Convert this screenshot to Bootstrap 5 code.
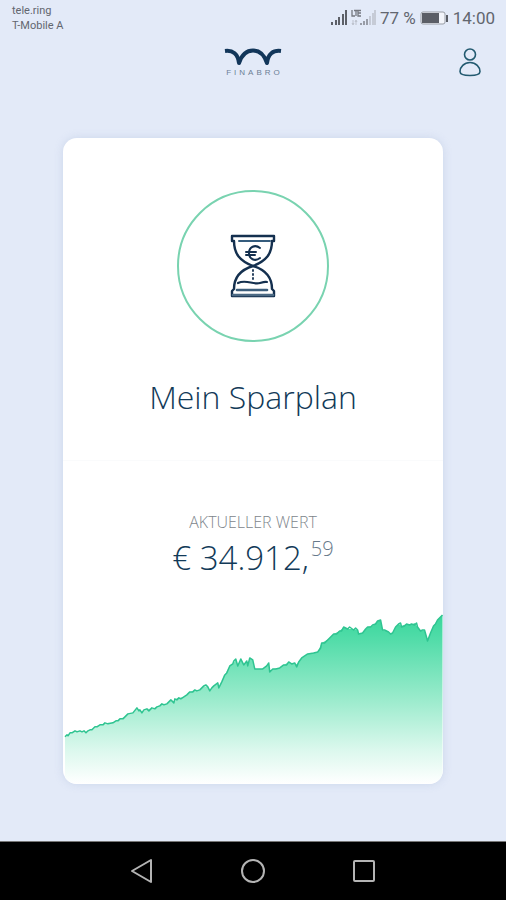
<!DOCTYPE html>
<html lang="de">
<head>
<meta charset="utf-8">
<meta name="viewport" content="width=device-width, initial-scale=1">
<title>Finabro – Mein Sparplan</title>
<link href="https://cdn.jsdelivr.net/npm/bootstrap@5.3.0/dist/css/bootstrap.min.css" rel="stylesheet">
<style>
  body { background: #e3eaf8; font-family: "Open Sans", sans-serif; color: #123a58; }
  svg { display: block; }
  .status { height: 36px; padding: 3px 11px 0 12px; font-family: Roboto, sans-serif; color: #62666f; }
  .carrier { font-size: 11px; line-height: 15px; }
  .meter { font-size: 17px; line-height: 30px; }
  .brandbar { display: grid; grid-template-columns: 1fr auto 1fr; padding: 10px 24px 0 24px; }
  .brand { grid-column: 2; }
  .wordmark { font-size: 8px; line-height: 10px; letter-spacing: 3px; margin-right: -3px; color: #6b7f96; font-family: "Liberation Sans", sans-serif; }
  .plan { width: 75%; margin-top: 12px; border-radius: 14px; box-shadow: 0 0 8px rgba(150, 170, 205, .3); }
  .emblem { width: 152px; height: 152px; border: 2px solid #79d3b0; }
  .plan-top { padding: 52px 0 40px; border-bottom: 1px solid #fafbfc; }
  .plan-title { font-size: 32px; line-height: 46px; font-weight: 300; margin: 32px 0 0; }
  .plan-value { padding: 50px 0 31px; }
  .caption-text { font-size: 16px; line-height: 22px; font-weight: 300; color: #7d858c; }
  .amount { gap: 2px; margin-top: 2px; font-size: 33px; line-height: 46px; font-weight: 300; }
  .cents { font-size: 20px; line-height: 28px; color: #66798a; }
  .softkeys { background: #000; height: 59px; border-top: 1px solid #777; padding: 0 21%; }
  .softkeys button { width: 72px; }
</style>
<script src="https://cdn.jsdelivr.net/npm/bootstrap@5.3.0/dist/js/bootstrap.bundle.min.js"></script>
</head>
<body class="d-flex flex-column min-vh-100">
  <div class="status d-flex justify-content-between align-items-start">
    <div class="carrier">tele.ring<br>T-Mobile A</div>
    <div class="meter d-flex align-items-center">
      <svg width="48" height="18" viewBox="0 0 48 18" aria-hidden="true">
        <g fill="#5d6068" transform="translate(3 0)"><path d="M0 13h2v3H0zM4 11h2v5H4zM7 8h2v8H7zM11 5h2v11h-2zM14 1h2v15h-2z"/></g>
        <path d="M24 1v6h3M26 1.500h4M28 1.500v5.500M33 1.500h-3v5.500h3M30 4h3" fill="none" stroke="#74777f" stroke-width="1.300"/>
        <path d="M25 11v4m-1-1 1 2 1-2M28 16v-4m-1 1 1-2 1 2" fill="none" stroke="#b2b6c0" stroke-width=".8"/>
        <g fill="#999da7"><path d="M32 14h2v2h-2zM35 12h2v4h-2zM38 10h2v6h-2z"/></g>
        <g fill="#c6cbd6"><path d="M41 7h2v9h-2zM44 4h2v12h-2zM46 1h2v15h-2z"/></g>
      </svg>
      <span class="ms-1">77 %</span>
      <svg class="ms-1" width="29" height="14" viewBox="0 0 29 14" aria-hidden="true">
        <rect x="1" y="1" width="24" height="12" rx="2" fill="#f3f5fb" stroke="#999da5"/>
        <path d="M2 2h17v10H2z" fill="#5b5e66"/><path d="M26 4h2v7h-2z" fill="#5b5e66"/>
      </svg>
      <span class="ms-1">14:00</span>
    </div>
  </div>

  <header class="brandbar align-items-start">
    <a href="#" class="brand text-decoration-none d-flex flex-column align-items-center" aria-label="Finabro">
      <svg width="58" height="22" viewBox="0 0 58 22" aria-hidden="true">
        <path d="M1 5C9 4 14 8 15 17C18 8 23 4.500 29 4.500S40 8 43 17C44 8 49 4 57 5" fill="none" stroke="#12365a" stroke-width="4" stroke-linejoin="round"/>
      </svg>
      <span class="wordmark">FINABRO</span>
    </a>
    <button class="btn p-0 border-0 ms-auto" type="button" aria-label="Profil">
      <svg width="24" height="32" viewBox="0 0 24 32" fill="none" stroke="#235a70" stroke-width="1.600" aria-hidden="true">
        <circle cx="12" cy="8.500" r="5.500"/><path d="M12 16.500C6 16.500 2 21 2 25.500C2 28 6 29.500 12 29.500S22 28 22 25.500C22 21 18 16.500 12 16.500Z"/>
      </svg>
    </button>
  </header>

  <main class="flex-grow-1 d-flex flex-column align-items-center pt-5 pb-5">
    <article class="plan bg-white overflow-hidden text-center">
      <section class="plan-top">
        <div class="emblem rounded-circle mx-auto d-flex align-items-center justify-content-center">
          <svg width="48" height="64" viewBox="0 0 48 64" fill="none" stroke="#14304f" stroke-width="2.400" stroke-linejoin="round" stroke-linecap="round" aria-hidden="true">
            <path d="M3 2H45V7H43C43 20 37 27 24 32C11 27 5 20 5 7H3Z"/>
            <path d="M10 7H41" stroke="#355c7d" stroke-width="2"/>
            <path d="M24 32C11 36 5 44 5 55L3 57V62H45V57L43 55C43 44 37 36 24 32"/>
            <path d="M8 56H38" stroke="#3c5e7c" stroke-width="2.600"/>
            <path d="M4 61H44" stroke="#4c6a84" stroke-width="2.600"/>
            <path d="M9 49C17 45 24 51 31 49S36 48 38 48" stroke-width="2.200"/>
            <path d="M24 36V45" stroke-width="1.800" stroke-dasharray="1 3"/>
            <path d="M31 14C26 10 20 13 20 19S26 28 31 24M17 18H27M17 21H26" stroke-width="2"/>
          </svg>
        </div>
        <h1 class="plan-title">Mein Sparplan</h1>
      </section>
      <section class="plan-value">
        <div class="caption-text">AKTUELLER WERT</div>
        <div class="amount d-flex justify-content-center align-items-start"><span>€ 34.912,</span><span class="cents">59</span></div>
      </section>
      <svg class="w-100" viewBox="63 612 380 172" role="img" aria-label="Wertentwicklung">
        <defs><linearGradient id="fade" x1="0" y1="614" x2="0" y2="784" gradientUnits="userSpaceOnUse">
          <stop offset="0" stop-color="#38d69b"/><stop offset=".12" stop-color="#4cdba6"/><stop offset=".5" stop-color="#9aebcc"/><stop offset=".8" stop-color="#dbf8ed"/><stop offset="1" stop-color="#fff"/>
        </linearGradient></defs>
        <path fill="url(#fade)" d="M65 784V737L70 733L75 731L80 731L86 732L90 730L95 727L100 725L108 723L113 723L120 719L125 717L128 714L133 713L137 708L142 712L147 709L152 709L157 707L162 704L167 704L171 700L174 702L177 698L184 697L190 692L195 690L200 690L204 686L208 687L210 691L214 686L218 683L219 688L222 682L225 675L230 666L234 663L236 659L238 666L241 659L244 665L247 661L248 666L250 658L253 660L255 669L263 669L269 663L270 672L273 669L280 668L284 665L289 662L292 664L297 664L302 658L308 654L318 652L322 643L329 639L334 634L340 631L344 627L348 629L354 629L358 630L359 634L363 633L368 627L373 626L378 621L381 620L383 630L387 631L391 634L393 633L396 627L399 624L402 626L407 624L412 625L415 623L418 627L421 631L425 630L428 641L431 633L434 626L438 620L443 615V784Z"/>
        <path fill="none" stroke="#2fc491" stroke-width="1.500" stroke-linejoin="round" d="M65 737L67 735L68 736L70 733L72 733L75 731L77 732L80 731L82 732L84 731L86 733L88 731L90 730L92 730L95 727L97 727L100 725L103 725L105 723L108 724L113 723L116 721L118 721L120 719L123 719L125 717L128 714L133 713L137 708L139 711L140 710L142 713L144 710L147 709L149 711L152 708L155 709L157 707L160 706L162 704L164 705L167 704L169 702L171 700L174 703L175 699L177 700L179 698L181 699L184 697L187 695L190 692L193 692L195 690L197 691L200 690L204 686L206 685L208 687L210 691L212 688L214 686L218 683L219 688L222 682L225 675L227 673L230 666L233 664L234 661L236 659L238 666L241 659L244 665L247 661L248 666L250 658L253 660L255 669L258 669L263 669L267 666L269 663L270 672L273 669L276 669L280 668L284 665L287 665L289 662L292 664L295 663L297 667L299 662L302 658L305 656L308 654L314 653L318 652L321 648L322 643L325 643L329 639L332 636L334 634L337 634L340 631L342 631L344 627L348 629L350 627L354 630L356 628L358 630L359 634L363 633L366 629L368 627L371 627L373 625L376 624L378 621L381 620L383 630L385 630L387 631L389 632L391 634L393 633L396 627L399 624L401 623L402 627L405 626L407 624L410 625L412 624L415 625L417 623L418 627L421 631L423 630L425 630L427 637L428 641L431 633L434 626L436 624L438 620L441 617L443 615"/>
      </svg>
    </article>
  </main>

  <nav class="softkeys d-flex justify-content-between align-items-center" aria-label="System">
    <button class="btn border-0 p-0" type="button" aria-label="Zurück">
      <svg class="mx-auto" width="26" height="28" viewBox="0 0 26 28" fill="none" stroke="#b4b4b4" stroke-width="2" stroke-linejoin="round"><path d="M22 3V25L3 14Z"/></svg>
    </button>
    <button class="btn border-0 p-0" type="button" aria-label="Startbildschirm">
      <svg class="mx-auto" width="26" height="28" viewBox="0 0 26 28" fill="none" stroke="#b4b4b4" stroke-width="2"><circle cx="13" cy="14" r="11"/></svg>
    </button>
    <button class="btn border-0 p-0" type="button" aria-label="Letzte Apps">
      <svg class="mx-auto" width="26" height="28" viewBox="0 0 26 28" fill="none" stroke="#b4b4b4" stroke-width="2"><rect x="3" y="4" width="20" height="20" rx="1"/></svg>
    </button>
  </nav>
</body>
</html>
